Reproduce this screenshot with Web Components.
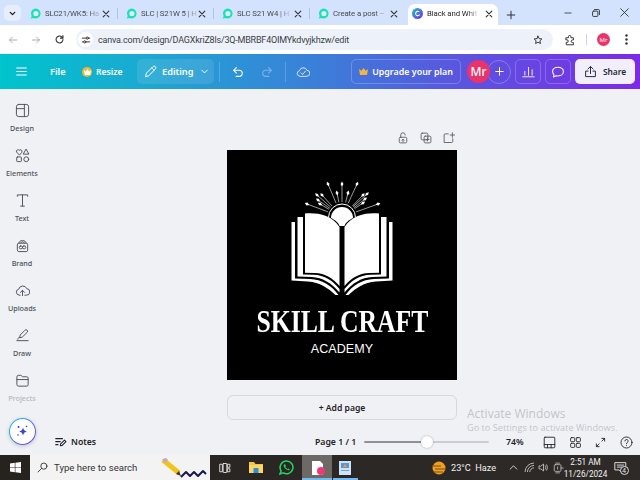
<!doctype html>
<html>
<head>
<meta charset="utf-8">
<style>
  html, body { margin: 0; height: 100%; overflow: hidden; background: #f0f1f5; }
  body { display: flex; flex-direction: column; width: 640px; height: 480px; font-family: "Noto Sans", sans-serif; }
</style>
</head>
<body>
<chrome-strip>
  <browser-tab label="SLC21/WK5: Ha"></browser-tab>
  <browser-tab label="SLC | S21W 5 | H"></browser-tab>
  <browser-tab label="SLC S21 W4 | H"></browser-tab>
  <browser-tab label="Create a post –"></browser-tab>
  <browser-tab label="Black and Whit" active></browser-tab>
</chrome-strip>
<address-bar url="canva.com/design/DAGXkriZ8ls/3Q-MBRBF4OIMYkdvyjkhzw/edit"></address-bar>
<canva-bar></canva-bar>
<editor-main>
  <side-rail>
    <rail-item label="Design" icon="design"></rail-item>
    <rail-item label="Elements" icon="elements"></rail-item>
    <rail-item label="Text" icon="text"></rail-item>
    <rail-item label="Brand" icon="brand"></rail-item>
    <rail-item label="Uploads" icon="uploads"></rail-item>
    <rail-item label="Draw" icon="draw"></rail-item>
    <rail-item label="Projects" icon="projects" dim></rail-item>
  </side-rail>
  <design-stage></design-stage>
</editor-main>
<win-taskbar></win-taskbar>

<script>
// stroke icons used in more than one element
const line = (d, size, color, sw = 1.3, vb = 16) =>
  `<svg width="${size}" height="${size}" viewBox="0 0 ${vb} ${vb}" fill="none" stroke="${color}" stroke-width="${sw}" stroke-linecap="round" stroke-linejoin="round">${d}</svg>`;

class ChromeStrip extends HTMLElement {
  connectedCallback() {
    this.attachShadow({ mode: "open" }).innerHTML = `
      <style>
        :host { display: flex; height: 25px; background: #d3e3fd; flex: none; padding-left: 4px; box-sizing: border-box; align-items: flex-end; color: #1f1f1f; }
        .menu { width: 17px; height: 16px; border-radius: 5px; background: #e6eefc; margin-bottom: 4px; margin-right: 1px; display: flex; align-items: center; justify-content: center; }
        .tabs { display: flex; height: 21px; }
        .plus { margin: 0 0 0 7px; width: 12px; height: 21px; display: flex; align-items: center; justify-content: center; }
        .win { margin-left: auto; display: flex; height: 25px; align-items: center; }
        .win span { width: 28.5px; display: flex; justify-content: center; }
      </style>
      <div class="menu">${line('<path d="M4 6l4 4 4-4"/>', 9, "#1f1f1f", 2.4)}</div>
      <div class="tabs"><slot></slot></div>
      <div class="plus">${line('<path d="M8 2v12M2 8h12"/>', 10, "#333", 1.6)}</div>
      <div class="win">
        <span>${line('<path d="M3 8h10"/>', 10, "#333", 1.3)}</span>
        <span>${line('<rect x="2.5" y="5" width="8.5" height="8.5" rx="1.5"/><path d="M5.5 2.5h6.5a1.5 1.5 0 0 1 1.5 1.5v6.5"/>', 10, "#333", 1.5)}</span>
        <span style="margin-right:1px">${line('<path d="M2.5 2.5l11 11M13.5 2.5l-11 11"/>', 11, "#333", 1.3)}</span>
      </div>`;
  }
}
customElements.define("chrome-strip", ChromeStrip);

class BrowserTab extends HTMLElement {
  connectedCallback() {
    const active = this.hasAttribute("active");
    const icon = active
      ? `<svg width="11" height="11" viewBox="0 0 11 11"><defs><linearGradient id="c" x1="0" y1="0" x2="1" y2="1"><stop offset="0" stop-color="#16c4d0"/><stop offset="1" stop-color="#7a2be0"/></linearGradient></defs><circle cx="5.5" cy="5.5" r="5.5" fill="url(#c)"/><path d="M7.4 6.9C6.4 8 3.8 8.1 3.6 5.8 3.5 3.8 5.8 2.6 6.8 3.6" fill="none" stroke="#fff" stroke-width="1.1" stroke-linecap="round"/></svg>`
      : `<svg width="11" height="11" viewBox="0 0 11 11"><path d="M5.8.6a4.9 4.9 0 1 1-2.3 9.3L.8 10.4l.9-2.4A4.9 4.9 0 0 1 5.8.6z" fill="#1fe0b4"/><circle cx="5.9" cy="5.5" r="2.6" fill="#d8f5f3"/></svg>`;
    this.attachShadow({ mode: "open" }).innerHTML = `
      <style>
        :host { display: flex; align-items: center; box-sizing: border-box; height: 21px; font: 7.8px Roboto, sans-serif; letter-spacing: -.1px; color: #474a4f; position: relative; }
        :host(:not([active])) { width: 96px; padding: 0 7px 2px 8px; }
        :host(:not([active]))::after { content: ""; position: absolute; right: 0; top: 4px; width: 1px; height: 11px; background: #a9c4ee; }
        :host(:nth-child(4))::after { display: none; }
        :host([active]) { width: 90px; margin-left: 2px; padding: 0 4px 2px 4px; background: #fff; border-radius: 7px 7px 0 0; color: #1f1f1f; }
        .fav { width: 11px; height: 11px; flex: none; }
        .name { flex: none; margin-left: 4px; white-space: nowrap; -webkit-mask-image: linear-gradient(90deg, #000 80%, rgba(0,0,0,.2)); mask-image: linear-gradient(90deg, #000 80%, rgba(0,0,0,.2)); }
        .x { flex: none; margin-left: auto; width: 10px; height: 10px; }
      </style>
      <span class="fav">${icon}</span>
      <span class="name">${this.getAttribute("label")}</span>
      <span class="x">${line('<path d="M3.5 3.5l9 9M12.5 3.5l-9 9"/>', 10, "#333", 1.8)}</span>`;
  }
}
customElements.define("browser-tab", BrowserTab);

class AddressBar extends HTMLElement {
  connectedCallback() {
    this.attachShadow({ mode: "open" }).innerHTML = `
      <style>
        :host { display: flex; align-items: center; height: 29px; flex: none; background: #fff; box-sizing: border-box; padding: 0 0 0 8px; }
        .nav { width: 23px; display: flex; justify-content: flex-start; }
        .pill { margin-left: 6px; width: 477px; height: 21px; border-radius: 11px; background: #edf2fa; display: flex; align-items: center; box-sizing: border-box; padding: 0 10px 0 2px; }
        .tune { width: 15px; height: 15px; border-radius: 50%; background: #fff; display: flex; align-items: center; justify-content: center; margin-right: 5px; }
        .url { flex: 1; font: 9px Roboto, sans-serif; letter-spacing: -.2px; color: #3c4043; white-space: nowrap; }
        .right { display: flex; align-items: center; margin-left: 11px; }
        .sep { width: 1px; height: 11px; background: #c5d5ef; margin: 0 10px; }
        .av { width: 13px; height: 13px; border-radius: 50%; background: #e8336b; color: #fff; font: 6px "Noto Sans", sans-serif; display: flex; align-items: center; justify-content: center; }
      </style>
      <span class="nav">${line('<path d="M14 8H2.5M7 3.5L2.5 8 7 12.5"/>', 10, "#9aa0a6", 1.3)}</span>
      <span class="nav">${line('<path d="M2 8h11.5M9 3.5L13.5 8 9 12.5"/>', 10, "#9aa0a6", 1.3)}</span>
      <span class="nav" style="width:16px">${line('<path d="M13 8a5 5 0 1 1-1.6-3.7L13 6M13 2.2V6H9.3"/>', 11, "#333", 1.6)}</span>
      <div class="pill">
        <span class="tune">${line('<path d="M2 5h6M12 5h2M2 11h2M8 11h6"/><circle cx="10" cy="5" r="1.8"/><circle cx="6" cy="11" r="1.8"/>', 10, "#333", 1.5)}</span>
        <span class="url">${this.getAttribute("url")}</span>
        ${line('<path d="M8 1.8l1.9 4 4.3.5-3.2 3 .9 4.3L8 11.5l-3.9 2.1.9-4.3-3.2-3 4.3-.5z"/>', 10, "#222", 1.4)}
      </div>
      <div class="right">
        ${line('<path d="M3 5h3V3.5a1.6 1.6 0 0 1 3.2 0V5h3.3v3h-1.2a1.7 1.7 0 0 0 0 3.4h1.2v3H3v-3.2h1a1.7 1.7 0 0 0 0-3.4H3z"/>', 12, "#333", 1.3)}
        <span class="sep"></span>
        <span class="av">Mr</span>
        <span style="margin-left:15px;display:flex"><svg width="3" height="11" viewBox="0 0 3 11" fill="#333"><circle cx="1.5" cy="1.5" r="1.2"/><circle cx="1.5" cy="5.5" r="1.2"/><circle cx="1.5" cy="9.5" r="1.2"/></svg></span>
      </div>`;
  }
}
customElements.define("address-bar", AddressBar);

class CanvaBar extends HTMLElement {
  connectedCallback() {
    const w = "#fff";
    this.attachShadow({ mode: "open" }).innerHTML = `
      <style>
        :host { display: flex; align-items: center; height: 35px; flex: none; box-sizing: border-box; padding: 0 5px 0 16px; color: #fff;
          background: linear-gradient(90deg, #00c4cc 0%, #1ba9d2 22%, #3c7ed9 50%, #5a55de 72%, #7d2ae8 100%);
          font: 600 9.2px "Noto Sans", sans-serif; }
        .file { margin-left: 23px; width: 16px; }
        .resize { display: flex; align-items: center; gap: 4px; margin-left: 16px; width: 40px; white-space: nowrap; font-size: 8.6px; }
        .coin { width: 10px; height: 10px; flex: none; border-radius: 50%; background: #f7b733; display: flex; align-items: center; justify-content: center; }
        .editing { display: flex; align-items: center; margin-left: 15px; width: 77px; height: 25px; border-radius: 5px; background: rgba(255,255,255,.1); box-sizing: border-box; padding-left: 7px; flex: none; }
        .editing b { font-weight: 600; width: 32px; margin: 0 6px 0 5px; }
        .div { width: 1px; height: 20px; background: rgba(255,255,255,.2); flex: none; }
        .cluster { margin-left: auto; display: flex; align-items: center; }
        .up { display: flex; align-items: center; justify-content: center; gap: 4px; width: 110px; height: 25px; box-sizing: border-box; border: 1px solid rgba(255,255,255,.22); border-radius: 5px; font-size: 8.9px; }
        .mr { width: 23px; height: 23px; border-radius: 50%; background: #e8336b; display: flex; align-items: center; justify-content: center; font: 500 12px "Noto Sans", sans-serif; margin-left: 6px; position: relative; z-index: 1; }
        .add { width: 24px; height: 24px; border-radius: 50%; border: 1px solid rgba(255,255,255,.25); box-sizing: border-box; display: flex; align-items: center; justify-content: center; margin-left: -3px; }
        .sq { width: 26px; height: 25px; box-sizing: border-box; border: 1px solid rgba(255,255,255,.22); border-radius: 5px; display: flex; align-items: center; justify-content: center; margin-left: 4px; }
        .share { width: 60px; height: 25px; border-radius: 5px; background: #f3eefc; color: #1f2937; display: flex; align-items: center; justify-content: center; gap: 6px; margin-left: 4px; font-size: 8.4px; }
      </style>
      ${line('<path d="M1 3h14M1 8h14M1 13h14"/>', 11, w, 1.5)}
      <span class="file">File</span>
      <span class="resize"><span class="coin"><svg width="7" height="6" viewBox="0 0 7 6" fill="#fff"><path d="M0 1l1.8 1.4L3.5 0l1.7 2.4L7 1 6.2 6H.8z"/></svg></span>Resize</span>
      <div class="editing">
        ${line('<path d="M2 14l1-4L11 2a1.8 1.8 0 0 1 3 3l-8 8zM9.5 3.5l3 3"/>', 13, w, 1.2)}
        <b>Editing</b>
        ${line('<path d="M3 5.5l5 5 5-5"/>', 9, w, 1.7)}
      </div>
      <span class="div" style="margin-left:5px"></span>
      <span style="margin-left:12px;display:flex">${line('<path d="M5.5 3L2 6.5 5.5 10M2.5 6.5h7a3.8 3.8 0 0 1 0 7.5H5"/>', 13, w, 1.3)}</span>
      <span style="margin-left:15px;display:flex;opacity:.35">${line('<path d="M10.5 3L14 6.5 10.5 10M13.5 6.5h-7a3.8 3.8 0 0 0 0 7.5H11"/>', 13, w, 1.3)}</span>
      <span class="div" style="margin-left:12px"></span>
      <span style="margin-left:10px;display:flex;opacity:.85">${line('<path d="M4.5 13a3.3 3.3 0 0 1-.5-6.5A4.5 4.5 0 0 1 12.5 6a3.5 3.5 0 0 1-.5 7zM5.8 9l1.8 1.8L10.8 7"/>', 14, w, 1.1)}</span>
      <div class="cluster">
        <div class="up"><svg width="9" height="7" viewBox="0 0 9 7" fill="#f2b544"><path d="M0 1l2.3 1.8L4.5 0l2.2 2.8L9 1 8 7H1z"/></svg>Upgrade your plan</div>
        <span class="mr">Mr</span>
        <span class="add">${line('<path d="M8 2.5v11M2.5 8h11"/>', 11, w, 1.4)}</span>
        <span class="sq">${line('<path d="M1 14.5h14M3.5 12.5V8M8 12.5V3M12.5 12.5V6"/>', 13, w, 1.1)}</span>
        <span class="sq">${line('<path d="M8 2.5c3.6 0 6.2 2.2 6.2 5s-2.6 5-6.2 5c-.8 0-1.5-.1-2.2-.3L3 13.8l.3-2.9C2.4 10 1.8 8.8 1.8 7.5c0-2.8 2.6-5 6.2-5z"/>', 14, w, 1.2)}</span>
        <div class="share">${line('<path d="M8 10.5V2M4.8 5L8 1.8 11.2 5M5 7.5H2v6.8h12V7.5h-3"/>', 13, "#1f2937", 1.2)}Share</div>
      </div>`;
  }
}
customElements.define("canva-bar", CanvaBar);

class EditorMain extends HTMLElement {
  connectedCallback() {
    this.attachShadow({ mode: "open" }).innerHTML = `
      <style>
        :host { display: flex; flex: 1; min-height: 0; background: #f0f1f5; position: relative; }
      </style>
      <slot></slot>`;
  }
}
customElements.define("editor-main", EditorMain);

const RAIL_ICONS = {
  design: '<rect x="1.5" y="1.5" width="13" height="13" rx="2.5"/><path d="M10 1.5v13M1.5 6H10"/>',
  elements: '<path d="M4.5 7.3L1.6 4.2a1.7 1.7 0 0 1 2.9-1.7 1.7 1.7 0 0 1 2.9 1.7z"/><path d="M12 1.5l2.8 5H9.2z"/><rect x="1.8" y="9.5" width="5" height="5" rx=".8"/><circle cx="12" cy="12" r="2.6"/>',
  text: '<path d="M2.5 3.5V2h11v1.5M8 2v12M6 14h4"/>',
  brand: '<path d="M2.5 7a1.5 1.5 0 0 1 1.5-1.5h8A1.5 1.5 0 0 1 13.500 7v6A1.500 1.500 0 0 1 12 14.500H4A1.500 1.500 0 0 1 2.500 13zM4 5.500c.5-4 7.500-4 8 0M6 5.500c.5-2 3.500-2 4 0"/><rect x="4.500" y="8.500" width="3.500" height="3" rx="1.500"/><rect x="8" y="8.500" width="3.500" height="3" rx="1.500"/>',
  uploads: '<path d="M4.500 13a3.300 3.300 0 0 1-.5-6.500A4.500 4.500 0 0 1 12.500 6a3.500 3.500 0 0 1-.5 7h-1.500M5.500 13H5M8 13.500V8M5.800 10L8 7.800 10.200 10"/>',
  draw: '<path d="M5 10l.6-2.600L10.500 2.500a1.600 1.600 0 0 1 2.600 2L8 9.500zM2 13.500h12"/><path d="M3 12c0-1.500 1-2 2-2"/>',
  projects: '<path d="M2 4a1.500 1.500 0 0 1 1.500-1.500h2.800L8 4h4.500A1.500 1.500 0 0 1 14 5.500v7a1.500 1.500 0 0 1-1.500 1.500h-9A1.500 1.500 0 0 1 2 12.500zM2 7h12"/>',
};

class SideRail extends HTMLElement {
  connectedCallback() {
    this.attachShadow({ mode: "open" }).innerHTML = `
      <style>
        :host { display: block; width: 44px; flex: none; padding-top: 14px; box-sizing: border-box; position: relative; }
        .magic { position: absolute; left: 9px; top: 329px; width: 27px; height: 27px; border-radius: 50%; padding: 1px; box-sizing: border-box;
          background: linear-gradient(135deg, #1cc8dc, #7d2ae8); box-shadow: 0 1px 4px rgba(0,0,0,.18); }
        .magic div { width: 100%; height: 100%; border-radius: 50%; background: #fff; display: flex; align-items: center; justify-content: center; }
      </style>
      <slot></slot>
      <div class="magic"><div><svg width="15" height="15" viewBox="0 0 15 15" fill="#3a3fe0"><path d="M8 3.500c.5 2.500 1.500 3.500 4 4-2.500.5-3.500 1.500-4 4-.5-2.500-1.500-3.500-4-4 2.500-.5 3.500-1.500 4-4z"/><circle cx="3.500" cy="3" r="1"/><circle cx="11.500" cy="2.500" r=".8"/><circle cx="3" cy="11" r=".8"/></svg></div></div>`;
  }
}
customElements.define("side-rail", SideRail);

class RailItem extends HTMLElement {
  connectedCallback() {
    this.attachShadow({ mode: "open" }).innerHTML = `
      <style>
        :host { display: flex; flex-direction: column; align-items: center; height: 45px; box-sizing: border-box; font: 500 7.2px "Noto Sans", sans-serif; color: #4b5059; }
        :host([dim]) { color: #b3b7bf; }
        span { margin-top: 5px; line-height: 11px; }
        svg { display: block; }
      </style>
      ${line(RAIL_ICONS[this.getAttribute("icon")], 15, "#50555e", 1.05)}
      <span>${this.getAttribute("label")}</span>`;
  }
}
customElements.define("rail-item", RailItem);

class DesignStage extends HTMLElement {
  connectedCallback() {
    this.attachShadow({ mode: "open" }).innerHTML = `
      <style>
        :host { display: flex; flex-direction: column; flex: 1; min-width: 0; position: relative; color: #1f2328; }
        .center { width: 230px; margin-left: 183px; }
        .tools { display: flex; justify-content: flex-end; gap: 11px; height: 15px; margin-top: 43px; margin-bottom: 3px; padding-right: 2px; }
        .add { height: 25px; margin-top: 15px; border: 1px solid #d6d8de; border-radius: 6px; box-sizing: border-box; display: flex; align-items: center; justify-content: center; font: 600 8.6px "Noto Sans", sans-serif; }
        .foot { margin-top: auto; height: 26px; display: flex; align-items: center; font: 600 8.7px "Noto Sans", sans-serif; white-space: nowrap; }
        .notes { display: flex; align-items: center; gap: 4px; margin-left: 11px; width: 260px; }
        .page { width: 39px; }
        .track { width: 125px; height: 2px; margin-left: 10px; background: linear-gradient(90deg, #8c929c 50%, #c9ccd3 50%); position: relative; border-radius: 1px; }
        .track i { position: absolute; left: 57px; top: -5px; width: 12px; height: 12px; border-radius: 50%; background: #fff; box-shadow: 0 0 2px rgba(0,0,0,.35); }
        .pct { margin-left: 17px; width: 31px; }
        .ic { display: flex; width: 25.500px; justify-content: center; }
        .wm { position: absolute; left: 423px; top: 316px; color: rgba(120,124,132,.42); font-family: "Open Sans", sans-serif; white-space: nowrap; pointer-events: none; }
        .wm div:first-child { font-size: 12px; line-height: 17px; }
        .wm div:last-child { font-size: 9.200px; line-height: 15px; margin-top: -2px; }
      </style>
      <div class="center">
        <div class="tools">
          ${line('<rect x="3" y="7" width="10" height="7.500" rx="1.500"/><path d="M5 7V4a3 3 0 0 1 6 0M8 13V10M6.500 11L8 9.500 9.500 11"/>', 12, "#5a5e66", 1.2)}
          ${line('<rect x="1.500" y="1.500" width="9" height="9" rx="1.500"/><rect x="5.500" y="5.500" width="9" height="9" rx="1.500"/><path d="M10 8v4M8 10h4"/>', 12, "#5a5e66", 1.2)}
          ${line('<path d="M7 2.500H3A1.500 1.500 0 0 0 1.500 4v10h10A1.500 1.500 0 0 0 13 12.500V9M12.500 1v6M9.500 4h6"/>', 12, "#5a5e66", 1.2)}
        </div>
        <design-page></design-page>
        <div class="add">+ Add page</div>
      </div>
      <div class="foot">
        <div class="notes">${line('<path d="M1 3.500h9M1 7.500h6M1 11.500h3M7 13l.6-2.500 5-5 2 2-5 5z"/>', 12, "#1f2328", 1.4)}Notes</div>
        <span class="page">Page 1 / 1</span>
        <span class="track"><i></i></span>
        <span class="pct">74%</span>
        <span class="ic">${line('<rect x="1.500" y="1.500" width="13" height="13" rx="1"/><path d="M1.500 10.500h13M5.500 10.500v4M10 10.500v4"/>', 13, "#1f2328", 1.1)}</span>
        <span class="ic">${line('<rect x="2" y="2" width="5" height="5" rx="1"/><rect x="9" y="2" width="5" height="5" rx="1"/><rect x="2" y="9" width="5" height="5" rx="1"/><rect x="9" y="9" width="5" height="5" rx="1"/>', 13, "#1f2328", 1.1)}</span>
        <span class="ic">${line('<path d="M10 2h4v4M14 2l-4 4M6 14H2v-4M2 14l4-4"/>', 11, "#1f2328", 1.300)}</span>
        <span class="ic">${line('<circle cx="8" cy="8" r="6.800"/><path d="M6 6.200a2 2 0 1 1 2.800 1.900c-.6.300-.8.700-.8 1.400M8 11.800v.1"/>', 13, "#1f2328", 1.100)}</span>
      </div>
      <div class="wm"><div>Activate Windows</div><div>Go to Settings to activate Windows.</div></div>`;
  }
}
customElements.define("design-stage", DesignStage);

class DesignPage extends HTMLElement {
  connectedCallback() {
    // rays of the emblem, tip positions in page pixels
    const tips = [[307,204],[317,195],[322,195],[318,200],[320,204],[328,184],[337,193],[342,184],[348,193],[357,184],[367,194],[363,195],[365,199],[363,203],[378,204]];
    const rays = tips.map(([x, y]) => {
      const a = Math.atan2(y - 217, x - 342), c = Math.cos(a), s = Math.sin(a);
      const r = `M${(342 + c * 15).toFixed(1)} ${(217 + s * 15).toFixed(1)}L${x} ${y}`;
      const p = (d, w) => `${(x + c * d - s * w).toFixed(1)},${(y + s * d + c * w).toFixed(1)}`;
      return `<path d="${r}" stroke="#fff" stroke-width=".6"/><polygon fill="#fff" points="${p(2.500,0)} ${p(0,1.500)} ${p(-2.500,0)} ${p(0,-1.500)}"/>`;
    }).join("");
    const half = `
      <path d="M305 213.500C316 212.500 331 214 339.500 227V286C333 278 325 273.500 315 273L305 272.700Z"/>
      <path d="M297.500 217H303V274.500L313 274.700C325 275 333 281 339.500 289V292.500C332 283 322 277.500 312 277L297.500 276.500Z"/>
      <path d="M291.500 222H295V278.500L310 279C322 279.500 331 285 338.500 295H335.500C328 288 320 282.500 308 281.500L291.500 280.500Z"/>`;
    this.attachShadow({ mode: "open" }).innerHTML = `
      <style>
        :host { display: flex; flex-direction: column; align-items: center; width: 230px; height: 230px; background: #000; color: #fff; position: relative; }
        svg { position: absolute; left: 0; top: 0; }
        .t1 { margin-top: 155px; font: 700 31.500px/34px "Liberation Serif", serif; white-space: nowrap; position: relative; transform: scaleX(.815); }
        .t2 { margin-top: 2px; font: 12.500px/16px "Liberation Sans", sans-serif; letter-spacing: .1px; position: relative; }
      </style>
      <svg width="230" height="230" viewBox="227 150 230 230" fill="#fff">
        ${rays}
        <path d="M328.500 217.500a13.500 13.500 0 0 1 27 0" fill="none" stroke="#fff" stroke-width="1"/>
        <path d="M331 218a11 11 0 0 1 22 0C349 220 345 223 344.500 226H339.500C339 223 335 220 331 218Z"/>
        <g>${half}</g>
        <g transform="translate(684 0) scale(-1 1)">${half}</g>
      </svg>
      <div class="t1">SKILL CRAFT</div>
      <div class="t2">ACADEMY</div>`;
  }
}
customElements.define("design-page", DesignPage);

class WinTaskbar extends HTMLElement {
  connectedCallback() {
    this.attachShadow({ mode: "open" }).innerHTML = `
      <style>
        :host { display: flex; align-items: center; height: 25px; flex: none; color: #f1f1f1; font: 9.600px Roboto, sans-serif;
          background: linear-gradient(90deg, #26231f 0%, #2b2724 50%, #2e2a27 100%); position: relative; }
        .start { width: 30px; display: flex; justify-content: center; }
        .search { width: 180px; height: 25px; box-sizing: border-box; background: #f3f3f3; color: #333; display: flex; align-items: center; padding-left: 7px; gap: 6px; position: relative; }
        .deco { position: absolute; left: 131px; top: 2px; }
        .app { display: flex; justify-content: center; width: 31px; }
        .now { width: 30px; height: 25px; background: #6d6965; display: flex; align-items: center; justify-content: center; box-shadow: inset 0 -2px 0 #76b9ed; }
        .other { width: 25px; height: 25px; display: flex; align-items: center; justify-content: center; margin-left: 1px; box-shadow: inset 0 -2px 0 #76b9ed; }
        .weather { margin-left: 74px; display: flex; align-items: center; gap: 5px; width: 62px; white-space: nowrap; font-size: 9.200px; }
        .weather svg { flex: none; }
        .tray { display: flex; align-items: center; margin-left: 13px; }
        .tray span { display: flex; }
        .clock { width: 40px; margin-left: 1.500px; text-align: center; font-size: 8.200px; line-height: 12px; white-space: nowrap; display: flex; flex-direction: column; align-items: center; }
        .note { margin-left: 8px; position: relative; display: flex; }
        .note b { position: absolute; left: 6px; top: 5px; width: 9px; height: 9px; border-radius: 50%; background: #2b2724; border: 1px solid #ddd; box-sizing: border-box; font: 6.500px/7px "Noto Sans", sans-serif; text-align: center; }
      </style>
      <div class="start"><svg width="11" height="11" viewBox="0 0 11 11" fill="#fff"><path d="M0 1.500l4.800-.7v4.400H0zM5.400.7L11 0v5.200H5.400zM0 5.800h4.800v4.400L0 9.500zM5.400 5.800H11V11l-5.600-.8z"/></svg></div>
      <div class="search">
        ${line('<circle cx="10" cy="6" r="4.500"/><path d="M6.500 9.500L1.500 14.500"/>', 11, "#333", 1.300)}
        <span>Type here to search</span>
        <svg class="deco" width="47" height="22" viewBox="0 0 47 22" fill="none">
          <path d="M2 3L18 16" stroke="#f0c419" stroke-width="5"/><path d="M1 2.500L5 1l2 2-3 3z" fill="#c9a0dc"/><path d="M18 14l2 5-5-2z" fill="#333"/>
          <path d="M20 20l5-5 4 4 4-4 4 4 5-5 3 3" stroke="#17174f" stroke-width="2" stroke-linejoin="round"/>
        </svg>
      </div>
      <div class="app" style="width:30px">${line('<rect x="1.500" y="3" width="3" height="10"/><rect x="5.500" y="2" width="5" height="12" rx=".5"/><rect x="11.500" y="3" width="3" height="4"/><rect x="11.500" y="9" width="3" height="4"/>', 12, "#e8e8e8", 1.200)}</div>
      <div class="app"><svg width="14" height="13" viewBox="0 0 14 13"><path d="M0 1h5l1.500 2H14v9H0z" fill="#f4c542"/><rect x="0" y="4" width="14" height="8" fill="#fbd866"/><rect x="4.500" y="7" width="5" height="5" fill="#2a8fd8"/></svg></div>
      <div class="app"><svg width="15" height="15" viewBox="0 0 15 15"><path d="M7.500 1a6.400 6.400 0 1 1-3.200 11.900L1 14l1.100-3.200A6.400 6.400 0 0 1 7.500 1z" fill="none" stroke="#25d366" stroke-width="1.500"/><path d="M5 4.500c-.8 1 0 3 1.500 4.300S9.800 10.700 10.800 9.700L9.500 8.500l-.9.500C7.800 8.600 6.800 7.600 6.400 6.700l.6-.8L6 4.300z" fill="#25d366"/></svg></div>
      <div class="now"><svg width="15" height="16" viewBox="0 0 15 16"><path d="M2 1h8l3 3v11H2z" fill="#fff"/><circle cx="11" cy="11" r="4" fill="#ec3a78"/></svg></div>
      <div class="other"><svg width="13" height="14" viewBox="0 0 13 14"><rect width="12" height="14" fill="#cfe3f7"/><rect x="2" y="2" width="8" height="5" fill="#5a94d6"/><path d="M6 3l2 3H4z" fill="#f0a030"/><rect x="2" y="9" width="8" height="1" fill="#7aa0c8"/></svg></div>
      <div class="weather"><svg width="14" height="14" viewBox="0 0 14 14"><circle cx="7" cy="7" r="6.500" fill="#f0a020"/><path d="M0 5h9M3 8h11M2 11h9" stroke="#7c4a20" stroke-width="1"/></svg><span>23°C&nbsp; Haze</span></div>
      <div class="tray">
        <span style="width:12px;justify-content:center">${line('<path d="M2 11l6-6 6 6"/>', 9, "#eee", 1.500)}</span>
        <span style="margin-left:4.500px">${line('<path d="M1.500 14A12.500 12.500 0 0 1 14 1.500M5 14a9 9 0 0 1 9-9M8.500 14A5.500 5.500 0 0 1 14 8.500"/>', 11, "#bbb", 1.400)}</span>
        <span style="margin-left:3px">${line('<path d="M1.500 6v4h2.500L8 13V3L4 6zM10.500 5.500c1 1.500 1 3.500 0 5M12.500 4c1.500 2.500 1.500 5.500 0 8"/>', 11, "#ddd", 1.100)}</span>
        <span style="margin-left:3.500px">${line('<rect x="3" y="3.500" width="9" height="9" rx="1.500"/><path d="M5 1.500h5M5 14.500h5M7.500 6.500v3M12 8h3"/>', 12, "#ccc", 1)}</span>
      </div>
      <div class="clock"><span>2:51 AM</span><span>11/26/2024</span></div>
      <div class="note">${line('<path d="M1.500 2h13v9h-5l-1.500 2-1.500-2h-5zM4 5h8M4 7.500h6"/>', 13, "#eee", 1.100)}<b>4</b></div>`;
  }
}
customElements.define("win-taskbar", WinTaskbar);
</script>
</body>
</html>
